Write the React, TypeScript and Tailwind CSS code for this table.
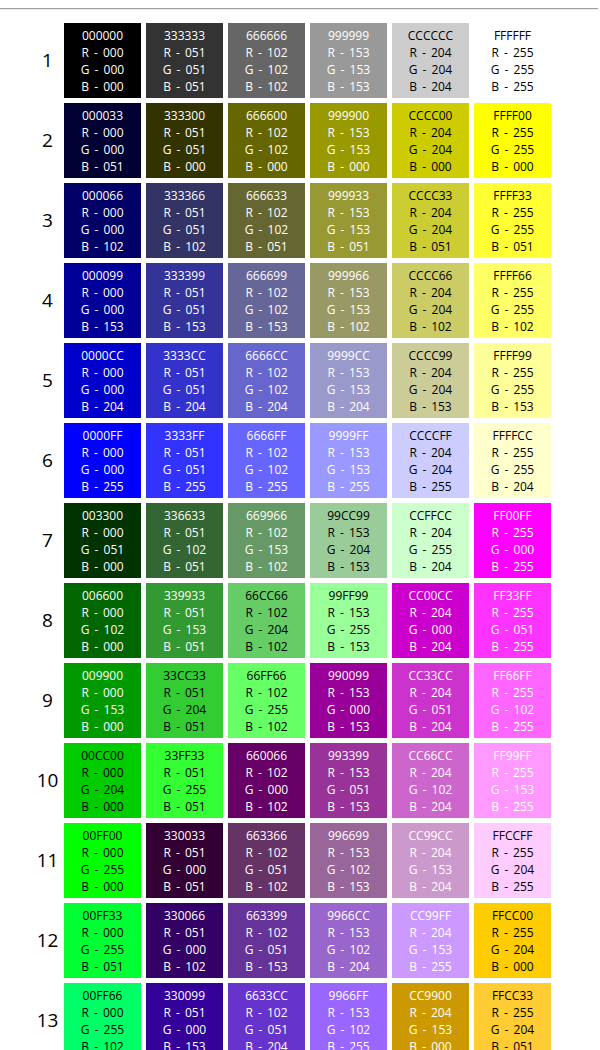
const rows: string[][] = [
  ["000000", "333333", "666666", "999999", "CCCCCC", "FFFFFF"],
  ["000033", "333300", "666600", "999900", "CCCC00", "FFFF00"],
  ["000066", "333366", "666633", "999933", "CCCC33", "FFFF33"],
  ["000099", "333399", "666699", "999966", "CCCC66", "FFFF66"],
  ["0000CC", "3333CC", "6666CC", "9999CC", "CCCC99", "FFFF99"],
  ["0000FF", "3333FF", "6666FF", "9999FF", "CCCCFF", "FFFFCC"],
  ["003300", "336633", "669966", "99CC99", "CCFFCC", "FF00FF"],
  ["006600", "339933", "66CC66", "99FF99", "CC00CC", "FF33FF"],
  ["009900", "33CC33", "66FF66", "990099", "CC33CC", "FF66FF"],
  ["00CC00", "33FF33", "660066", "993399", "CC66CC", "FF99FF"],
  ["00FF00", "330033", "663366", "996699", "CC99CC", "FFCCFF"],
  ["00FF33", "330066", "663399", "9966CC", "CC99FF", "FFCC00"],
  ["00FF66", "330099", "6633CC", "9966FF", "CC9900", "FFCC33"],
];

const pad = (n: number) => String(n).padStart(3, "0");

const Swatch = ({ hex }: { hex: string }) => {
  const r = parseInt(hex.slice(0, 2), 16);
  const g = parseInt(hex.slice(2, 4), 16);
  const b = parseInt(hex.slice(4, 6), 16);
  // dark text once green gets bright enough
  const fg = g >= 204 ? "#000000" : "#ffffff";

  return (
    <div
      className="h-[75px] flex flex-col items-center justify-center text-[12px] leading-[17px] whitespace-pre [word-spacing:2px]"
      style={{ backgroundColor: `#${hex}`, color: fg }}
    >
      <span>{hex}</span>
      <span>R - {pad(r)}</span>
      <span>G - {pad(g)}</span>
      <span>B - {pad(b)}</span>
    </div>
  );
};

export default function App() {
  return (
    <div className="min-h-[1050px] bg-white pt-2 font-[family-name:'Open_Sans','Noto_Sans',sans-serif] text-black">
      <div className="border-t border-[#a0a0a0] border-b border-b-[#ececec] mr-[2px]" />
      <div className="grid grid-cols-[23px_repeat(6,77px)] gap-[5px] pl-[36px] pt-[13px]">
        {rows.map((row, i) => (
          <div key={i} className="contents">
            <div className="flex items-center justify-center text-[19px]">{i + 1}</div>
            {row.map((hex) => (
              <Swatch key={hex} hex={hex} />
            ))}
          </div>
        ))}
      </div>
    </div>
  );
}
